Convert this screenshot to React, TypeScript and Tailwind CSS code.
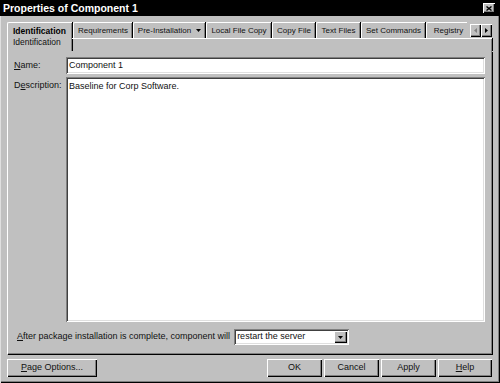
import React from "react";

const raised =
  "shadow-[inset_1px_1px_0_#ffffff,inset_-1px_-1px_0_#000000,inset_-2px_-2px_0_#808080]";
const sunken =
  "shadow-[inset_1px_1px_0_#808080,inset_-1px_-1px_0_#ffffff,inset_2px_2px_0_#404040,inset_-2px_-2px_0_#dfdfdf]";

const tabs = [
  { label: "Requirements", w: "w-[59px]" },
  { label: "Pre-Installation", w: "w-[72px]", arrow: true },
  { label: "Local File Copy", w: "w-[65px]" },
  { label: "Copy File", w: "w-[43px]" },
  { label: "Text Files", w: "w-[44px]" },
  { label: "Set Commands", w: "w-[64px]" },
  { label: "Registry", w: "w-[44px]" },
];

function DownTriangle({ small }: { small?: boolean }) {
  return small ? (
    <svg width="5" height="3" viewBox="0 0 5 3" className="shrink-0">
      <path d="M0 0h5L2.5 3z" fill="#000" />
    </svg>
  ) : (
    <svg width="7" height="4" viewBox="0 0 7 4" className="shrink-0">
      <path d="M0 0h7L3.5 4z" fill="#000" />
    </svg>
  );
}

function Tab({ label, w, arrow }: { label: string; w: string; arrow?: boolean }) {
  return (
    <div
      className={`${w} h-[16px] shrink-0 flex items-center justify-center gap-[5px] border-t border-l border-white shadow-[inset_-1px_0_0_#808080,1px_0_0_#000000] rounded-tl-[2px] text-[8px] text-[#111] whitespace-nowrap`}
    >
      <span>{label}</span>
      {arrow && <DownTriangle small />}
    </div>
  );
}

function Button({ children, w }: { children: React.ReactNode; w: string }) {
  return (
    <div
      className={`${w} h-[18px] flex items-center justify-center text-[9px] text-[#111] ${raised}`}
    >
      {children}
    </div>
  );
}

export default function App() {
  return (
    <div className="w-[500px] h-[383px] bg-[#c0c0c0] flex flex-col overflow-hidden font-['Liberation_Sans',Arial,sans-serif] shadow-[inset_1px_0_0_#dfdfdf,inset_-1px_-1px_0_#000000,inset_-2px_-2px_0_#808080]">
      {/* title bar */}
      <div className="h-[16px] bg-black flex items-center justify-between pl-[3px] pr-[5px]">
        <span className="text-[10.5px] font-bold text-white leading-none">
          Properties of Component 1
        </span>
        <div className={`w-[12px] h-[10px] bg-[#c0c0c0] flex items-center justify-center ${raised}`}>
          <svg width="6" height="5" viewBox="0 0 6 5">
            <path d="M0.5 0.5l5 4M5.5 0.5l-5 4" stroke="#000" strokeWidth="1.4" />
          </svg>
        </div>
      </div>

      <div className="flex-1 flex flex-col pt-[6px] pl-[7px] pr-[8px] pb-[6px]">
        {/* tab row */}
        <div className="flex h-[29px]">
          <div className="w-[65px] h-[29px] shrink-0 border-t border-l border-white rounded-tl-[2px] shadow-[inset_-1px_0_0_#808080,1px_0_0_#000000] pl-[5px] pt-[3px] leading-[11px]">
            <div className="text-[8.5px] font-bold text-black">Identification</div>
            <div className="text-[8.5px] text-[#111]">Identification</div>
          </div>
          <div className="flex-1 flex flex-col ml-[1px]">
            <div className="h-[16px] flex">
              <div className="w-[394px] flex gap-[1px] overflow-hidden">
                {tabs.map((t) => (
                  <Tab key={t.label} {...t} />
                ))}
              </div>
              <div className="ml-[3px] mt-[2px] h-[13px] flex">
                <div className={`w-[11px] h-[13px] flex items-center justify-center ${raised}`}>
                  <svg width="3" height="5" viewBox="0 0 3 5">
                    <path d="M3 0v5L0 2.5z" fill="#808080" />
                  </svg>
                </div>
                <div className={`w-[11px] h-[13px] flex items-center justify-center ${raised}`}>
                  <svg width="3" height="5" viewBox="0 0 3 5">
                    <path d="M0 0v5l3-2.5z" fill="#000" />
                  </svg>
                </div>
              </div>
            </div>
            <div className="flex-1 border-t border-white -ml-[1px] shadow-[inset_-1px_0_0_#808080,1px_0_0_#000000]" />
          </div>
        </div>

        {/* tab panel */}
        <div className="h-[303px] border-l border-white shadow-[inset_-1px_-1px_0_#808080,1px_1px_0_#000000] flex flex-col pt-[6px] pl-[6px] pr-[7px] text-[9px] text-[#111]">
          <div className="flex items-center h-[17px]">
            <span className="w-[52px]">
              <u>N</u>ame:
            </span>
            <div className={`flex-1 h-[17px] bg-white flex items-center pl-[3px] ${sunken}`}>
              Component 1
            </div>
          </div>
          <div className="flex mt-[3px]">
            <span className="w-[52px] pt-[2px]">
              D<u>e</u>scription:
            </span>
            <div className={`flex-1 h-[245px] bg-white pl-[3px] pt-[3px] ${sunken}`}>
              Baseline for Corp Software.
            </div>
          </div>
          <div className="flex items-center h-[16px] mt-[7px] pl-[3px]">
            <span>
              <u>A</u>fter package installation is complete, component will
            </span>
            <div className={`ml-[4px] w-[115px] h-[16px] bg-white flex items-center justify-between pl-[3px] pr-[2px] ${sunken}`}>
              <span>restart the server</span>
              <div className={`w-[13px] h-[12px] bg-[#c0c0c0] flex items-center justify-center ${raised}`}>
                <DownTriangle small />
              </div>
            </div>
          </div>
        </div>

        {/* bottom buttons */}
        <div className="mt-[5px] flex justify-between">
          <Button w="w-[90px]">
            <span>
              <u>P</u>age Options...
            </span>
          </Button>
          <div className="flex gap-[2px]">
            <Button w="w-[55px]">OK</Button>
            <Button w="w-[55px]">Cancel</Button>
            <Button w="w-[55px]">Apply</Button>
            <Button w="w-[54px]">
              <span>
                <u>H</u>elp
              </span>
            </Button>
          </div>
        </div>
      </div>
    </div>
  );
}
